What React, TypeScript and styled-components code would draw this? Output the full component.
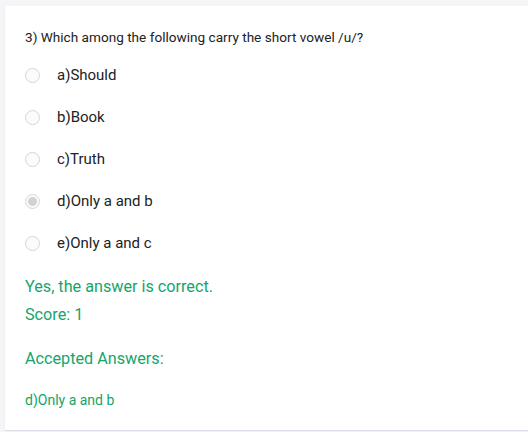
import React from "react";
import styled, { createGlobalStyle } from "styled-components";

const Global = createGlobalStyle`
  html, body { margin: 0; padding: 0; background: #f5f5f7; }
  body { font-family: Roboto, "Noto Sans", Arial, sans-serif; }
`;

const Page = styled.div`
  padding: 6px 0 2px 5px;
  width: 528px;
  height: 432px;
  box-sizing: border-box;
`;

const Card = styled.div`
  background: #fff;
  height: 424px;
  box-sizing: border-box;
  padding: 23px 0 0 20px;
  box-shadow: 0 1px 1px rgba(60, 50, 120, 0.12);
`;

const Question = styled.div`
  font-size: 13.6px;
  color: #222;
  line-height: 16px;
  margin-bottom: 20px;
`;

const Options = styled.div`
  display: flex;
  flex-direction: column;
  gap: 22px;
`;

const Option = styled.label`
  display: flex;
  align-items: center;
  height: 20px;
  font-size: 15px;
  color: #222;
`;

const Radio = styled.span<{ $checked?: boolean }>`
  width: 15px;
  height: 15px;
  box-sizing: border-box;
  border-radius: 50%;
  border: 1px solid #d6d6d6;
  background: #fbfbfb;
  margin-right: 17px;
  display: flex;
  align-items: center;
  justify-content: center;
  &::after {
    content: "";
    width: 9px;
    height: 9px;
    border-radius: 50%;
    background: ${(p) => (p.$checked ? "#d2d2d2" : "transparent")};
  }
`;

const Feedback = styled.div<{ $size: number; $top: number }>`
  color: #14a56c;
  font-size: ${(p) => p.$size}px;
  line-height: 20px;
  margin-top: ${(p) => p.$top}px;
`;

const options = ["a)Should", "b)Book", "c)Truth", "d)Only a and b", "e)Only a and c"];

export default function App() {
  return (
    <>
      <Global />
      <Page>
        <Card>
          <Question>3) Which among the following carry the short vowel /u/?</Question>
          <Options>
            {options.map((o, i) => (
              <Option key={o}>
                <Radio $checked={i === 3} />
                {o}
              </Option>
            ))}
          </Options>
          <Feedback $size={16.2} $top={24}>Yes, the answer is correct.</Feedback>
          <Feedback $size={16.2} $top={8}>Score: 1</Feedback>
          <Feedback $size={16.2} $top={24}>Accepted Answers:</Feedback>
          <Feedback $size={14} $top={21}>d)Only a and b</Feedback>
        </Card>
      </Page>
    </>
  );
}
